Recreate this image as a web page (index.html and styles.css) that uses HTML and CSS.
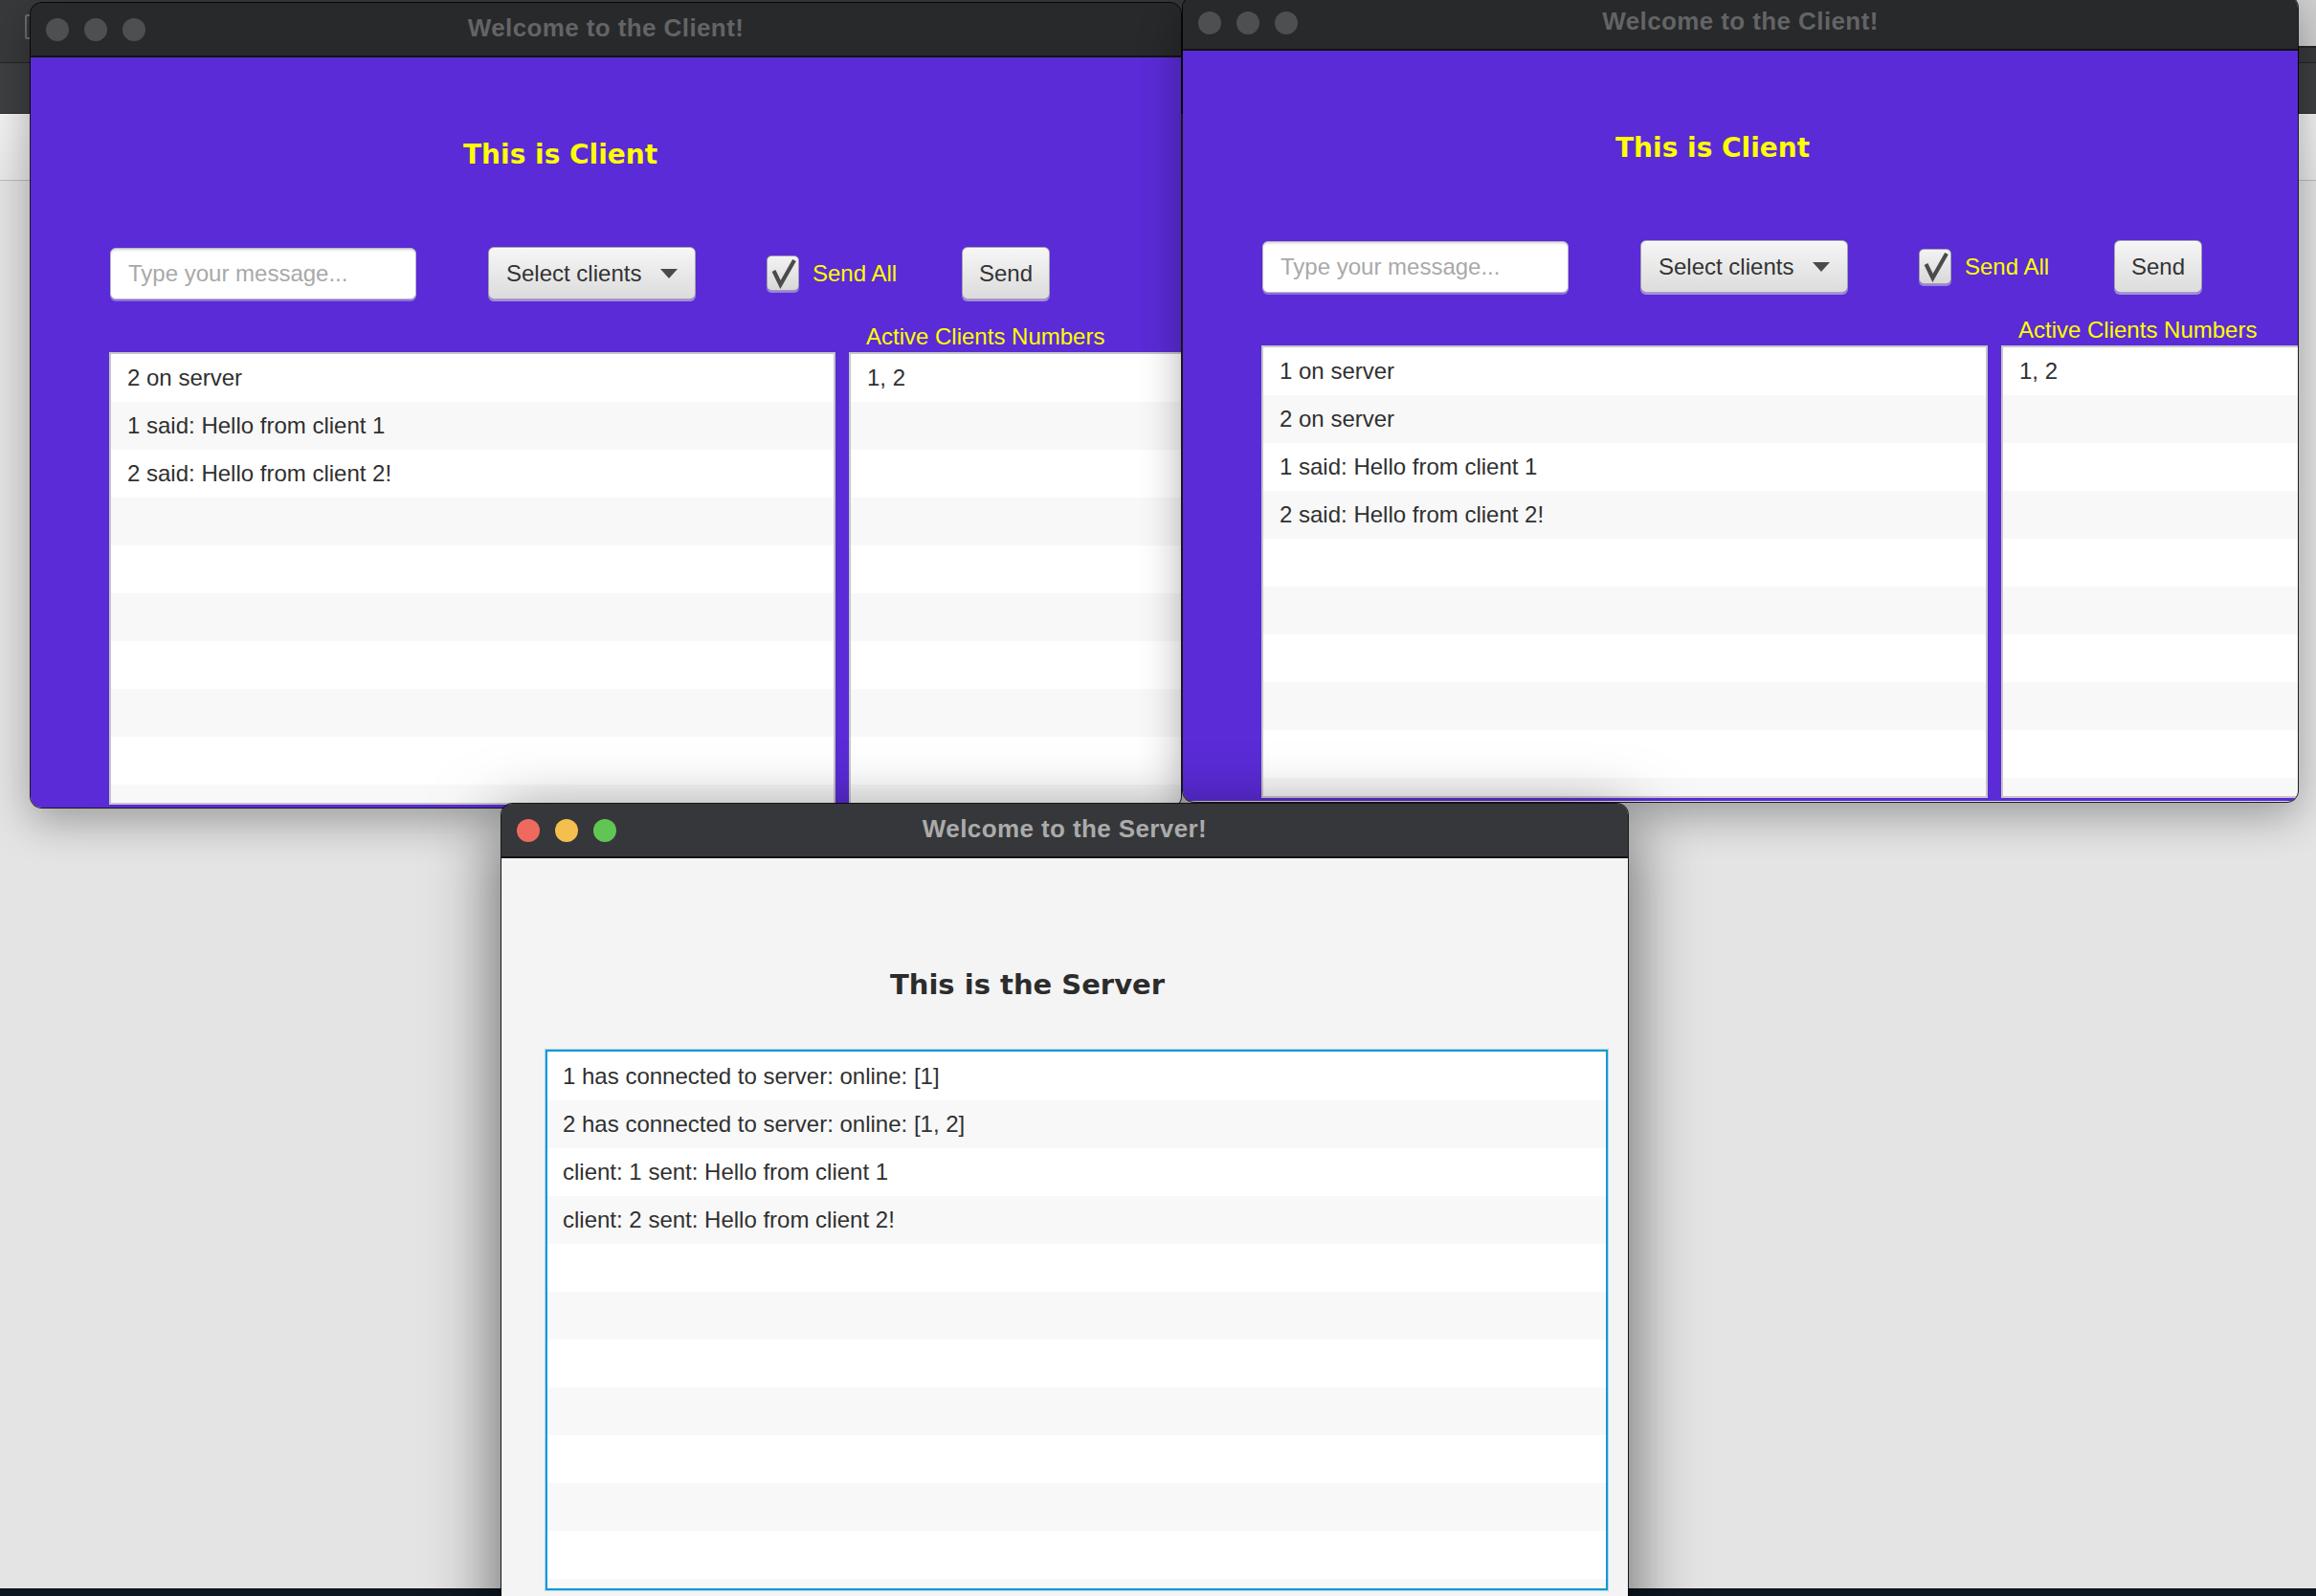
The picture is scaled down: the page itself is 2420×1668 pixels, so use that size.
FILE: index.html
```html
<!DOCTYPE html>
<html lang="en">
<head>
<meta charset="utf-8">
<title>Client / Server</title>
<link rel="stylesheet" href="styles.css">
</head>
<body>
<div class="desktop">
  <div class="bgapp">
    <div class="bgapp-top"><span class="bg-icon"></span></div>
    <div class="bgapp-bar"></div>
    <div class="bgapp-tool"></div>
    <div class="bgapp-right"></div>
  </div>
  <div class="dock"></div>

  <div class="window client win-left">
    <div class="titlebar">
      <div class="lights"><span></span><span></span><span></span></div>
      <div class="title">Welcome to the Client!</div>
      <div></div>
    </div>
    <div class="content">
      <h1 class="client-heading">This is Client</h1>
      <div class="controls">
        <div class="field">Type your message...</div>
        <div class="btn select"><span>Select clients</span><span class="arrow"></span></div>
        <div class="check"><svg viewBox="0 0 34 37" width="34" height="37"><path d="M7.5 16 L14.5 30.5 L29 5" fill="none" stroke="#4b4b4d" stroke-width="4.2" stroke-linejoin="miter"/></svg></div>
        <span class="check-label">Send All</span>
        <div class="btn send">Send</div>
      </div>
      <div class="active-label">Active Clients Numbers</div>
      <div class="lists">
        <div class="list main-list">
          <div class="cell">2 on server</div>
          <div class="cell">1 said: Hello from client 1</div>
          <div class="cell">2 said: Hello from client 2!</div>
        </div>
        <div class="list active-list">
          <div class="cell">1, 2</div>
        </div>
      </div>
    </div>
  </div>

  <div class="window client win-right">
    <div class="titlebar">
      <div class="lights"><span></span><span></span><span></span></div>
      <div class="title">Welcome to the Client!</div>
      <div></div>
    </div>
    <div class="content">
      <h1 class="client-heading">This is Client</h1>
      <div class="controls">
        <div class="field">Type your message...</div>
        <div class="btn select"><span>Select clients</span><span class="arrow"></span></div>
        <div class="check"><svg viewBox="0 0 34 37" width="34" height="37"><path d="M7.5 16 L14.5 30.5 L29 5" fill="none" stroke="#4b4b4d" stroke-width="4.2" stroke-linejoin="miter"/></svg></div>
        <span class="check-label">Send All</span>
        <div class="btn send">Send</div>
      </div>
      <div class="active-label">Active Clients Numbers</div>
      <div class="lists">
        <div class="list main-list">
          <div class="cell">1 on server</div>
          <div class="cell">2 on server</div>
          <div class="cell">1 said: Hello from client 1</div>
          <div class="cell">2 said: Hello from client 2!</div>
        </div>
        <div class="list active-list">
          <div class="cell">1, 2</div>
        </div>
      </div>
    </div>
  </div>

  <div class="window server">
    <div class="titlebar">
      <div class="lights"><span class="red"></span><span class="yellow"></span><span class="green"></span></div>
      <div class="title">Welcome to the Server!</div>
      <div></div>
    </div>
    <div class="content">
      <h1 class="server-heading">This is the Server</h1>
      <div class="list server-list">
        <div class="cell">1 has connected to server: online: [1]</div>
        <div class="cell">2 has connected to server: online: [1, 2]</div>
        <div class="cell">client: 1 sent: Hello from client 1</div>
        <div class="cell">client: 2 sent: Hello from client 2!</div>
      </div>
    </div>
  </div>
</div>
</body>
</html>
```

FILE: styles.css
```css
html, body {
  margin: 0;
  padding: 0;
}
body {
  width: 2420px;
  height: 1668px;
  overflow: hidden;
  background: #e4e4e4;
  font-family: "Liberation Sans", Arial, sans-serif;
}
.desktop {
  position: relative;
  width: 2420px;
  height: 1668px;
  overflow: hidden;
  background: #e4e4e4;
}

/* background application behind the windows */
.bgapp {
  position: absolute;
  left: 0;
  top: 0;
  width: 2420px;
}
.bgapp-top {
  height: 65px;
  background: #38393b;
  border-bottom: 1px solid #232425;
  position: relative;
}
.bg-icon {
  position: absolute;
  left: 26px;
  top: 15px;
  width: 14px;
  height: 22px;
  border: 2px solid #6b6c6e;
  border-radius: 2px;
}
.bgapp-bar {
  height: 52px;
  background: #3d3f41;
  border-bottom: 1px solid #2c2d2e;
}
.bgapp-tool {
  height: 69px;
  background: linear-gradient(#f3f3f3, #e9e9e9);
  border-bottom: 1px solid #bdbdbd;
}
.bgapp-right {
  position: absolute;
  right: 0;
  top: 0;
  width: 40px;
  height: 48px;
  background: #cfcfcf;
  border-bottom: 2px solid #262728;
}
.dock {
  position: absolute;
  left: 0;
  bottom: 0;
  width: 2420px;
  height: 8px;
  background: #0e1620;
}

/* windows */
.window {
  position: absolute;
  border-radius: 12px;
  overflow: hidden;
}
.win-left {
  left: 32px;
  top: 3px;
  width: 1202px;
  height: 841px;
  z-index: 1;
}
.win-right {
  left: 1236px;
  top: -4px;
  width: 1165px;
  height: 842px;
  z-index: 2;
}
.client {
  box-shadow: 0 0 0 1px rgba(0, 0, 0, 0.85), 0 14px 45px rgba(0, 0, 0, 0.33);
}
.server {
  left: 524px;
  top: 840px;
  width: 1177px;
  height: 900px;
  z-index: 3;
  box-shadow: 0 0 0 1px rgba(0, 0, 0, 0.85), 0 22px 70px 4px rgba(0, 0, 0, 0.56);
}

.titlebar {
  height: 55px;
  border-bottom: 2px solid #131314;
  background: #28292b;
  display: grid;
  grid-template-columns: 1fr auto 1fr;
  align-items: center;
}
.server .titlebar {
  background: #36373a;
}
.lights {
  display: flex;
  gap: 16px;
  padding-left: 16px;
}
.lights span {
  width: 24px;
  height: 24px;
  border-radius: 50%;
  background: #4e4f51;
}
.lights .red { background: #ee6a5f; }
.lights .yellow { background: #f5bf4f; }
.lights .green { background: #61c554; }

.title {
  font: bold 26px/1 "Liberation Sans", Arial, sans-serif;
  letter-spacing: 0.4px;
  color: #636466;
  margin-top: -3px;
  white-space: nowrap;
}
.server .title {
  color: #ababab;
}

/* client content */
.client .content {
  height: 784px;
  box-sizing: border-box;
  padding-top: 88px;
  background: #5a2bd6;
}
.client-heading {
  margin: 0 0 0 452px;
  font: bold 28px/28px "DejaVu Sans", sans-serif;
  color: #ffff00;
  white-space: nowrap;
}
.controls {
  display: flex;
  align-items: center;
  height: 55px;
  margin-top: 82px;
  padding-left: 83px;
  font-size: 24px;
}
.field {
  width: 320px;
  height: 54px;
  box-sizing: border-box;
  flex-shrink: 0;
  background: #fff;
  border: 1px solid #b7b7bf;
  border-radius: 6px;
  box-shadow: inset 0 4px 3px -3px rgba(0, 0, 0, 0.2), 0 2px 0 rgba(255, 255, 255, 0.3);
  padding-left: 18px;
  line-height: 52px;
  color: #a9a9a9;
  white-space: nowrap;
}
.btn {
  height: 55px;
  box-sizing: border-box;
  flex-shrink: 0;
  border: 1px solid #a3a3a9;
  border-radius: 6px;
  background: linear-gradient(#f6f6f6, #dcdcdc);
  box-shadow: inset 0 1px 0 #ffffff, 0 2px 0 rgba(255, 255, 255, 0.45);
  color: #333333;
  display: flex;
  align-items: center;
  white-space: nowrap;
}
.select {
  width: 217px;
  margin-left: 75px;
  padding-left: 18px;
}
.arrow {
  margin-left: auto;
  margin-right: 18px;
  width: 0;
  height: 0;
  border-left: 9px solid transparent;
  border-right: 9px solid transparent;
  border-top: 10px solid #4a4a4a;
}
.check {
  width: 34px;
  height: 37px;
  box-sizing: border-box;
  flex-shrink: 0;
  margin-left: 74px;
  border: 1px solid #a0a0a6;
  border-radius: 5px;
  background: linear-gradient(#f3f3f3, #d8d8d8);
  box-shadow: 0 2px 0 rgba(255, 255, 255, 0.4);
  position: relative;
}
.check svg {
  position: absolute;
  left: -1px;
  top: -1px;
}
.check-label {
  width: 90px;
  margin-left: 14px;
  color: #ffff00;
  white-space: nowrap;
}
.send {
  width: 92px;
  margin-left: 66px;
  justify-content: center;
}
.active-label {
  margin: 25px 0 0 873px;
  font-size: 24px;
  line-height: 27px;
  color: #ffff00;
  white-space: nowrap;
}
.lists {
  display: flex;
  gap: 14px;
  height: 473px;
  margin-top: 3px;
  padding-left: 82px;
}
.list {
  box-sizing: border-box;
  flex-shrink: 0;
  border: 2px solid #c6c6c8;
  background: repeating-linear-gradient(to bottom, #ffffff 0 50px, #f8f8f8 50px 100px);
}
.main-list {
  width: 759px;
}
.active-list {
  width: 420px;
}
.cell {
  height: 50px;
  line-height: 50px;
  padding-left: 17px;
  font-size: 24px;
  color: #303030;
  white-space: nowrap;
}

/* server content */
.server .content {
  height: 843px;
  box-sizing: border-box;
  padding-top: 118px;
  background: #f4f4f4;
}
.server-heading {
  margin: 0 0 0 406px;
  font: bold 29px/29px "DejaVu Sans", sans-serif;
  color: #2c2c2c;
  white-space: nowrap;
}
.server-list {
  width: 1110px;
  height: 565px;
  margin: 53px 0 0 46px;
  padding-top: 1px;
  border: 2px solid #1398d6;
  box-shadow: 0 0 0 1px rgba(19, 152, 214, 0.3);
  background-origin: content-box;
}
.server-list .cell {
  padding-left: 16px;
}
```
